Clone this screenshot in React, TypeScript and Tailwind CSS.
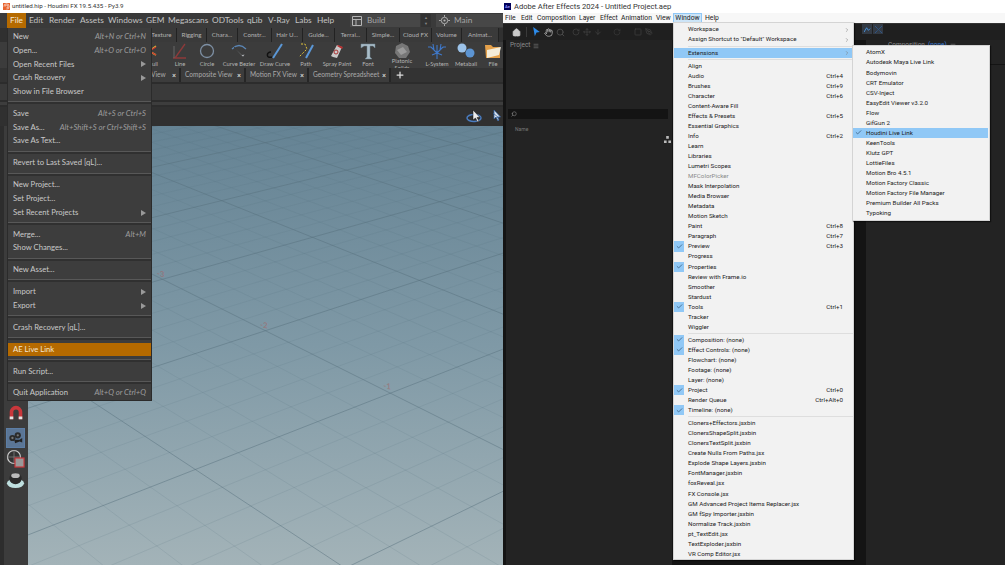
import { Check, ChevronRight, Hand, Home, Plus, RotateCw, Search, Square, PenTool, ArrowDown, Move, Menu } from 'lucide-react';

type HItem = { label?: string; keys?: string; arrow?: boolean; active?: boolean; sep?: boolean };

const fileMenu: HItem[] = [
  { label: 'New', keys: 'Alt+N or Ctrl+N' },
  { label: 'Open...', keys: 'Alt+O or Ctrl+O' },
  { label: 'Open Recent Files', arrow: true },
  { label: 'Crash Recovery', arrow: true },
  { label: 'Show in File Browser' },
  { sep: true },
  { label: 'Save', keys: 'Alt+S or Ctrl+S' },
  { label: 'Save As...', keys: 'Alt+Shift+S or Ctrl+Shift+S' },
  { label: 'Save As Text...' },
  { sep: true },
  { label: 'Revert to Last Saved [qL]...' },
  { sep: true },
  { label: 'New Project...' },
  { label: 'Set Project...' },
  { label: 'Set Recent Projects', arrow: true },
  { sep: true },
  { label: 'Merge...', keys: 'Alt+M' },
  { label: 'Show Changes...' },
  { sep: true },
  { label: 'New Asset...' },
  { sep: true },
  { label: 'Import', arrow: true },
  { label: 'Export', arrow: true },
  { sep: true },
  { label: 'Crash Recovery [qL]...' },
  { sep: true },
  { label: 'AE Live Link', active: true },
  { sep: true },
  { label: 'Run Script...' },
  { sep: true },
  { label: 'Quit Application', keys: 'Alt+Q or Ctrl+Q' },
];

type AItem = { label?: string; keys?: string; arrow?: boolean; on?: boolean; sep?: boolean; hot?: boolean; dim?: boolean };

const windowMenu: AItem[] = [
  { label: 'Workspace', arrow: true },
  { label: 'Assign Shortcut to "Default" Workspace', arrow: true },
  { sep: true },
  { label: 'Extensions', arrow: true, hot: true },
  { sep: true },
  { label: 'Align' },
  { label: 'Audio', keys: 'Ctrl+4' },
  { label: 'Brushes', keys: 'Ctrl+9' },
  { label: 'Character', keys: 'Ctrl+6' },
  { label: 'Content-Aware Fill' },
  { label: 'Effects & Presets', keys: 'Ctrl+5' },
  { label: 'Essential Graphics' },
  { label: 'Info', keys: 'Ctrl+2' },
  { label: 'Learn' },
  { label: 'Libraries' },
  { label: 'Lumetri Scopes' },
  { label: 'MFColorPicker', dim: true },
  { label: 'Mask Interpolation' },
  { label: 'Media Browser' },
  { label: 'Metadata' },
  { label: 'Motion Sketch' },
  { label: 'Paint', keys: 'Ctrl+8' },
  { label: 'Paragraph', keys: 'Ctrl+7' },
  { label: 'Preview', keys: 'Ctrl+3', on: true },
  { label: 'Progress' },
  { label: 'Properties', on: true },
  { label: 'Review with Frame.io' },
  { label: 'Smoother' },
  { label: 'Stardust' },
  { label: 'Tools', keys: 'Ctrl+1', on: true },
  { label: 'Tracker' },
  { label: 'Wiggler' },
  { sep: true },
  { label: 'Composition: (none)', on: true },
  { label: 'Effect Controls: (none)', on: true },
  { label: 'Flowchart: (none)' },
  { label: 'Footage: (none)' },
  { label: 'Layer: (none)' },
  { label: 'Project', keys: 'Ctrl+0', on: true },
  { label: 'Render Queue', keys: 'Ctrl+Alt+0' },
  { label: 'Timeline: (none)', on: true },
  { sep: true },
  { label: 'Cloners+Effectors.jsxbin' },
  { label: 'ClonersShapeSplit.jsxbin' },
  { label: 'ClonersTextSplit.jsxbin' },
  { label: 'Create Nulls From Paths.jsx' },
  { label: 'Explode Shape Layers.jsxbin' },
  { label: 'FontManager.jsxbin' },
  { label: 'foxReveal.jsx' },
  { label: 'FX Console.jsx' },
  { label: 'GM Advanced Project Items Replacer.jsx' },
  { label: 'GM fSpy Importer.jsxbin' },
  { label: 'Normalize Track.jsxbin' },
  { label: 'pt_TextEdit.jsx' },
  { label: 'TextExploder.jsxbin' },
  { label: 'VR Comp Editor.jsx' },
];

const extensions = [
  'AtomX', 'Autodesk Maya Live Link', 'Bodymovin', 'CRT Emulator', 'CSV-Inject', 'EasyEdit Viewer v3.2.0',
  'Flow', 'GifGun 2', 'Houdini Live Link', 'KeenTools', 'Klutz GPT', 'LottieFiles', 'Motion Bro 4.5.1',
  'Motion Factory Classic', 'Motion Factory File Manager', 'Premium Builder All Packs', 'Typoking',
];

const houdiniMenus = [
  ['Edit', 'w-[20px]'], ['Render', 'w-[31px]'], ['Assets', 'w-[28px]'], ['Windows', 'w-[38px]'], ['GEM', 'w-[22px]'],
  ['Megascans', 'w-[44px]'], ['ODTools', 'w-[35px]'], ['qLib', 'w-[21px]'], ['V-Ray', 'w-[27px]'], ['Labs', 'w-[22px]'], ['Help', 'w-[25px]'],
];

const shelfTabs = [
  ['Texture', 'w-[30px]'], ['Rigging', 'w-[30px]'], ['Chara...', 'w-[31px]'], ['Constr...', 'w-[34px]'], ['Hair U...', 'w-[31px]'],
  ['Guide...', 'w-[32px]'], ['Terrai...', 'w-[32px]'], ['Simple...', 'w-[33px]'], ['Cloud FX', 'w-[32px]'], ['Volume', 'w-[30px]'], ['Animat...', 'w-[37px]'],
];

function Viewport() {
  // floor grid in perspective, in a 3x coordinate space; every fifth line is the heavy one
  const vpA = [5500, -1050];
  const vpB = [-3150, -1115];
  const lines: { x1: number; y1: number; x2: number; y2: number; major: boolean }[] = [];
  for (let i = -100; i <= 30; i++) {
    const n = i / 5;
    const x = -3150 + 36068 / (8.32 - n);
    const y = 460 + 0.5 * x;
    const s = (y - vpA[1]) / (x - vpA[0]);
    lines.push({ x1: vpA[0], y1: vpA[1], x2: -400, y2: vpA[1] + s * (-400 - vpA[0]), major: i % 5 === 0 });
  }
  for (let i = -40; i <= 150; i++) {
    const k = i / 5;
    const x = 5500 - 43833 / (9.17 + k);
    const y = -1050 + (5500 - x) * 0.391;
    const s = (y - vpB[1]) / (x - vpB[0]);
    lines.push({ x1: vpB[0], y1: vpB[1], x2: 1100, y2: vpB[1] + s * (1100 - vpB[0]), major: i % 5 === 0 });
  }
  return (
    <div className="flex-1 overflow-hidden bg-gradient-to-b from-[#658394] via-[#7f99a6] to-[#a3b3b8]">
      <svg viewBox="-366 18 1425 1317" className="block h-full w-full">
        {lines.map((l, i) => (
          <line key={i} x1={l.x1} y1={l.y1} x2={l.x2} y2={l.y2} stroke="#566f7d" strokeOpacity={l.major ? 0.6 : 0.28} strokeWidth={l.major ? 2.4 : 1.6} />
        ))}
        <g fill="#a0686a" fillOpacity="0.6" fontFamily="Lato, sans-serif" fontSize="24" fontWeight="700">
          <text transform="translate(20 468) skewY(10)">-3</text>
          <text transform="translate(330 622) skewY(10)">-2</text>
          <text transform="translate(700 805) skewY(10)">-1</text>
        </g>
      </svg>
    </div>
  );
}

function ShelfIcon({ name }: { name: string }) {
  return (
    <svg viewBox="0 0 20 18" className="h-[18px] w-[20px]">
      {name === 'ull' && <path d="M4 1v16M4 9l7-5M4 9l7 4" stroke="#d8c33a" strokeWidth="1.500" fill="none" />}
      {name === 'ull' && <path d="M6 8l5-3M6 10l5 3" stroke="#c33" strokeWidth="1.200" fill="none" />}
      {name === 'Line' && <path d="M3 16h13M5 16L15 2" stroke="#8d3a3a" strokeWidth="1.300" fill="none" />}
      {name === 'Line' && <path d="M4 4v12" stroke="#666" strokeWidth="1" />}
      {name === 'Circle' && <circle cx="10" cy="9" r="6.500" stroke="#7d8fa3" strokeWidth="1.300" fill="none" />}
      {name === 'Curve Bezier' && <path d="M3 7Q10 0 17 7" stroke="#5b86b5" strokeWidth="1.200" fill="none" />}
      {name === 'Curve Bezier' && <path d="M5 5l8 8 3-1-2 3z" fill="#d9dde2" stroke="#333" strokeWidth="0.600" />}
      {name === 'Draw Curve' && <path d="M7 15C1 17 1 10 6 10" stroke="#111" strokeWidth="1.500" fill="none" />}
      {name === 'Draw Curve' && <path d="M8 16L17 2" stroke="#5b97d6" strokeWidth="2" />}
      {name === 'Path' && <path d="M5 2h4l2 5-8 8" stroke="#e0c13a" strokeWidth="1" strokeDasharray="2 1.500" fill="none" />}
      {name === 'Path' && <path d="M10 16l7-13" stroke="#5b97d6" strokeWidth="2" />}
      {name === 'Spray Paint' && <path d="M6 15l-2-1L10 3l5 2-5 11z" fill="#c9c9c9" />}
      {name === 'Spray Paint' && <path d="M11 3l5 2-1 2-5-3z" fill="#b83030" />}
      {name === 'Spray Paint' && <circle cx="9" cy="10" r="2" fill="none" stroke="#a33" />}
      {name === 'Font' && <path d="M3 2h14v4l-2-2h-3v11l2 2H7l2-2V4H6L3 6z" fill="#a9bcc8" stroke="#6f8492" strokeWidth="0.500" />}
      {name === 'Platonic Solids' && <path d="M10 1l6 3 2 6-4 6H7l-4-5 1-7z" fill="#777" />}
      {name === 'Platonic Solids' && <path d="M5 8l6-3 4 5-6 3z" fill="#9a9a9a" />}
      {name === 'L-System' && <path d="M10 17V9M10 11L4 5M10 11l6-6M7 8L6 2M13 8l1-6M4 5L1 5M16 5l3 0M10 9V3M5 13l5-2M15 13l-5-2" stroke="#3f78c9" strokeWidth="1.100" fill="none" />}
      {name === 'Metaball' && <circle cx="6" cy="6" r="4.500" fill="#9cc3ea" />}
      {name === 'Metaball' && <circle cx="14" cy="11" r="4.500" fill="#5c94d2" />}
      {name === 'File' && <path d="M2 3h6l2 2h7v11H3z" fill="#e4a04a" />}
      {name === 'File' && <path d="M4 8l14-3-2 8-12 3z" fill="#f4ecd8" />}
    </svg>
  );
}

function FileMenu() {
  return (
    <div className="absolute left-[7px] top-[28px] z-20 w-[145px] border-x border-b border-[#2b2b2b] bg-[#3d3d3d] pt-[2px] font-['Lato',sans-serif] text-[7.700px] text-[#c9c9c9]">
      {fileMenu.map((item, i) =>
        item.sep ? (
          <div key={i} className="h-[8.150px] pt-[2.500px]">
            <div className="h-[1px] bg-[#585858]" />
            <div className="h-[2px] bg-[#303030]" />
          </div>
        ) : (
          <div
            key={i}
            className={`flex h-[13.750px] items-center justify-between pl-[5px] pr-[5px] leading-none ${item.active ? 'bg-[#b56a00] text-[#f3e6d2]' : ''}`}
          >
            <span>{item.label}</span>
            {item.keys && <span className="italic text-[#9d9d9d]">{item.keys}</span>}
            {item.arrow && <span className="h-0 w-0 border-y-[3px] border-l-[5px] border-y-transparent border-l-[#9a9a9a]" />}
          </div>
        ),
      )}
    </div>
  );
}

function HoudiniWindow() {
  return (
    <div className="relative flex h-full w-[503px] flex-none flex-col overflow-hidden bg-[#333] font-['Lato',sans-serif] text-[#b4b4b4]">
      <div className="flex h-[13px] items-center gap-[2px] bg-white pl-[3px] font-['Roboto',sans-serif] text-[6.200px] text-[#333]">
        <svg viewBox="0 0 8 8" className="h-[7px] w-[7px]">
          <rect width="8" height="8" fill="#e8622c" />
          <path d="M1 4a3 3 0 1 1 3 3M2.500 4a1.500 1.500 0 1 1 1.500 1.500" stroke="#fff" strokeWidth="0.700" fill="none" />
        </svg>
        <span>untitled.hip - Houdini FX 19.5.435 - Py3.9</span>
      </div>

      <div className="flex h-[15px] items-center bg-[#3a3a3a] pl-[7px] text-[8.300px] text-[#c2c2c2]">
        <div className="flex h-full w-[19px] items-center justify-center bg-[#b56a00] text-[#f3e6d2]">File</div>
        <div className="flex h-full items-center pl-[3px]">
          {houdiniMenus.map(([name, w]) => (
            <span key={name} className={w}>{name}</span>
          ))}
        </div>
        <div className="ml-[8px] flex h-[13px] w-[70px] items-center gap-[5px] bg-[#474747] pl-[2px] text-[#a5a5a5]">
          <svg viewBox="0 0 10 10" className="h-[10px] w-[10px]">
            <path d="M.5.5h9v9h-9zM.5 3.500h9M4 3.500v6" stroke="#b5b5b5" fill="none" />
          </svg>
          Build
        </div>
        <span className="ml-[1px] flex h-[13px] w-[10px] flex-col items-center justify-center gap-[1px] bg-[#333] text-[4px] leading-[5px] text-[#888]">
          <span>▲</span>
          <span>▼</span>
        </span>
        <div className="ml-[5px] flex h-[13px] flex-1 items-center gap-[4px] bg-[#474747] pl-[3px] text-[#a5a5a5]">
          <svg viewBox="0 0 12 12" className="h-[11px] w-[11px]">
            <circle cx="6" cy="6" r="3.500" stroke="#b5b5b5" fill="none" />
            <circle cx="6" cy="6" r="1.200" fill="#b5b5b5" />
            <path d="M6 0v2M6 10v2M0 6h2M10 6h2" stroke="#b5b5b5" />
          </svg>
          Main
        </div>
      </div>

      <div className="flex h-[14px] items-stretch bg-[#303030] pl-[147px] text-[6.200px]">
        {shelfTabs.map(([name, w]) => (
          <div key={name} className={`flex flex-none items-center justify-center border-r border-[#222] bg-[#3a3a3a] ${w}`}>{name}</div>
        ))}
      </div>

      <div className="flex h-[26px] items-start bg-[#3c3c3c] pl-[143px] text-[5.800px] leading-[7px]">
        {([
          ['ull', 'w-[24px]'], ['Line', 'w-[26px]'], ['Circle', 'w-[28px]'], ['Curve Bezier', 'w-[36px]'], ['Draw Curve', 'w-[36px]'], ['Path', 'w-[26px]'],
          ['Spray Paint', 'w-[36px]'], ['Font', 'w-[26px]'], ['Platonic Solids', 'w-[42px]'], ['L-System', 'w-[28px]'], ['Metaball', 'w-[30px]'], ['File', 'w-[24px]'],
        ] as const).map(([name, w]) => (
          <div key={name} className={`flex flex-none flex-col items-center text-center ${w}`}>
            <ShelfIcon name={name} />
            <span className={name === 'Platonic Solids' ? 'mt-[-3px] w-[30px]' : ''}>{name}</span>
          </div>
        ))}
      </div>

      <div className="flex h-[14px] items-stretch bg-[#333] pl-[147px] text-[6.600px] text-[#aaa]">
        {[
          ['View', 'w-[34px]'], ['Composite View', 'w-[65px]'], ['Motion FX View', 'w-[63px]'], ['Geometry Spreadsheet', 'w-[82px]'],
        ].map(([name, w]) => (
          <div key={name} className={`flex flex-none items-center justify-between border-r-2 border-[#262626] bg-[#3c3c3c] pl-[4px] pr-[3px] ${w}`}>
            <span className="whitespace-nowrap">{name}</span>
            <span className="text-[7px] font-bold text-[#ddd]">×</span>
          </div>
        ))}
        <Plus size={10} strokeWidth={3} className="ml-[4px] self-center text-[#ddd]" />
      </div>

      <div className="h-[18px] border-t-2 border-[#2c2c2c] bg-[#3a3a3a]" />
      <div className="h-[7px] border-y-2 border-[#2c2c2c] bg-[#3d3d3d]" />
      <div className="relative h-[19px] bg-[#303030]">
        <svg viewBox="0 0 40 16" className="absolute left-[464px] top-[1px] h-[16px] w-[40px]">
          <ellipse cx="10" cy="10" rx="7" ry="3.500" fill="none" stroke="#4a7cc0" strokeWidth="1.500" />
          <path d="M9 2v10l2.500-2 2 4 1.500-1-2-3.500h3z" fill="#eee" stroke="#111" strokeWidth="0.500" />
          <path d="M29 5l6 5M30 2v9l2-2 2 4 1-1-1.500-3h3z" fill="#dfe6ef" stroke="#2e5e9e" strokeWidth="0.800" />
        </svg>
      </div>

      <div className="flex min-h-0 flex-1">
        <div className="flex w-[28px] flex-none flex-col items-start border-l-4 border-[#2d2d2d] bg-[#3c3c3c] pl-[2px] pt-[278px]">
          <svg viewBox="0 0 20 18" className="ml-[1px] h-[18px] w-[18px]">
            <path d="M3 16V8a7 7 0 0 1 14 0v8h-4V8a3 3 0 0 0-6 0v8z" fill="#c9373b" />
            <path d="M3 13h4v3H3zM13 13h4v3h-4z" fill="#e4e4e4" />
          </svg>
          <div className="mt-[6px] flex h-[20px] w-[19px] items-center justify-center border border-[#5c7ea6] bg-[#5b7696]">
            <svg viewBox="0 0 18 16" className="h-[16px] w-[16px]">
              <circle cx="5" cy="8" r="3.500" fill="#2b2b2b" />
              <circle cx="11" cy="5" r="3.500" fill="#2b2b2b" />
              <circle cx="5" cy="8" r="1.300" fill="#777" />
              <circle cx="11" cy="5" r="1.300" fill="#777" />
              <path d="M7 10h6l3-2v5l-3-1-5 2z" fill="#222" />
            </svg>
          </div>
          <svg viewBox="0 0 20 20" className="mt-[1px] h-[20px] w-[20px]">
            <circle cx="8" cy="8" r="6.500" fill="#333" stroke="#cfcfcf" strokeWidth="1.200" />
            <path d="M8 1v14M1 8h14" stroke="#888" strokeWidth="0.700" />
            <rect x="9" y="9" width="9" height="9" fill="#999" stroke="#c9373b" strokeWidth="1.200" />
          </svg>
          <svg viewBox="0 0 20 20" className="mt-[1px] h-[19px] w-[19px]">
            <ellipse cx="10" cy="14" rx="9" ry="5" fill="#bfe0e0" />
            <ellipse cx="10" cy="9" rx="6.500" ry="6" fill="#2a2a2a" />
            <ellipse cx="10" cy="6" rx="4.500" ry="2.500" fill="#bbb" />
          </svg>
        </div>
        <Viewport />
      </div>

      <FileMenu />
    </div>
  );
}

function WindowMenu() {
  return (
    <div className="absolute left-[170px] top-[22px] z-20 w-[181px] border border-[#d4d4d4] bg-[#f2f2f2] pb-[0.500px] pt-[1.500px] font-['Roboto',sans-serif] text-[6.200px] text-[#1c1c1c] shadow-[1px_1px_1px_rgba(0,0,0,0.5)]">
      {windowMenu.map((item, i) =>
        item.sep ? (
          <div key={i} className="flex h-[3px] items-center pl-[14px]">
            <div className="h-[1px] w-full bg-[#dedede]" />
          </div>
        ) : (
          <div key={i} className={`flex h-[10.050px] items-center pr-[3px] leading-none ${item.hot ? 'bg-[#90c8f6]' : ''}`}>
            <span className={`flex h-full w-[10px] flex-none items-center justify-center ${item.on ? 'bg-[#90c8f6]' : ''}`}>
              {item.on && <Check size={7} strokeWidth={2} className="text-[#1f3a55]" />}
            </span>
            <span className={`ml-[4px] flex-1 whitespace-nowrap ${item.dim ? 'text-[#8a8a8a]' : ''}`}>{item.label}</span>
            {item.keys && <span className="mr-[7px]">{item.keys}</span>}
            {item.arrow && <ChevronRight size={6} className="text-[#777]" />}
          </div>
        ),
      )}
    </div>
  );
}

function ExtensionsMenu() {
  return (
    <div className="absolute left-[349px] top-[45px] z-30 w-[138px] border border-[#d4d4d4] bg-[#f2f2f2] py-[1.500px] pr-[1px] font-['Roboto',sans-serif] text-[6.200px] text-[#1c1c1c] shadow-[1px_1px_1px_rgba(0,0,0,0.5)]">
      {extensions.map((name) => {
        const hot = name === 'Houdini Live Link';
        return (
          <div key={name} className={`flex h-[10.050px] items-center leading-none ${hot ? 'bg-[#90c8f6]' : ''}`}>
            <span className="flex h-full w-[10px] flex-none items-center justify-center">
              {hot && <Check size={7} strokeWidth={2} className="text-[#1f3a55]" />}
            </span>
            <span className="ml-[3px] whitespace-nowrap">{name}</span>
          </div>
        );
      })}
    </div>
  );
}

function AeWindow() {
  return (
    <div className="relative flex h-full w-[502px] flex-none flex-col overflow-hidden bg-[#1a1a1a] font-['Roboto',sans-serif]">
      <div className="flex h-[13px] items-center gap-[3px] bg-white pl-[1px] text-[7.600px] text-[#333]">
        <span className="flex h-[7px] w-[7px] items-center justify-center bg-[#00005b] text-[4px] font-bold leading-none text-[#9999ff]">Ae</span>
        <span>Adobe After Effects 2024 - Untitled Project.aep</span>
      </div>

      <div className="flex h-[10px] items-center bg-[#f7f7f7] pl-[2px] text-[6.800px] leading-none text-[#1c1c1c]">
        {[
          ['File', 'w-[16px]'], ['Edit', 'w-[16px]'], ['Composition', 'w-[42px]'], ['Layer', 'w-[21px]'], ['Effect', 'w-[21px]'], ['Animation', 'w-[35px]'], ['View', 'w-[17px]'],
        ].map(([name, w]) => (
          <span key={name} className={w}>{name}</span>
        ))}
        <span className="flex h-full w-[29px] items-center justify-center border border-[#90c8f6] bg-[#cce4f7]">Window</span>
        <span className="ml-[3px]">Help</span>
      </div>

      <div className="flex h-[17px] items-center gap-[3px] border-t border-[#333] bg-[#1f1f1f] pl-[9px]">
        <Home size={9} fill="#c9c9c9" className="text-[#c9c9c9]" />
        <span className="mx-[2px] h-[10px] w-px bg-[#3a3a3a]" />
        <svg viewBox="0 0 10 12" className="h-[10px] w-[9px]">
          <path d="M1 0l8 6-4 .500L3 11z" fill="#2d8ceb" />
        </svg>
        <Hand size={9} className="text-[#b5b5b5]" />
        <Search size={9} className="text-[#555]" />
        <RotateCw size={8} className="ml-[4px] text-[#444]" />
        <Move size={8} className="text-[#444]" />
        <ArrowDown size={8} className="text-[#444]" />
        <RotateCw size={8} className="ml-[8px] text-[#3a3a3a]" />
        <Square size={8} className="ml-[10px] text-[#444]" />
        <PenTool size={8} className="text-[#444]" />
      </div>

      <div className="flex min-h-0 flex-1 gap-[3px] bg-[#141414] pl-[3px]">
        <div className="flex w-[166px] flex-none flex-col bg-[#232323] text-[#8d8d8d]">
          <div className="flex h-[69px] items-start gap-[3px] pl-[4px] pt-[1px] text-[6.500px]">
            Project
            <Menu size={6} className="mt-[2px]" />
          </div>
          <div className="ml-[2px] flex h-[10px] w-[160px] items-center bg-[#141414] pl-[3px]">
            <Search size={6} className="-scale-x-100 text-[#999]" />
          </div>
          <div className="mt-[7px] pl-[9px] text-[5px] leading-[6px] text-[#777]">Name</div>
          <div className="mt-[4px] flex justify-end pr-[1px]">
            <svg viewBox="0 0 8 8" className="h-[7px] w-[7px]">
              <path d="M2.500 0h3v3h-3zM0 5h3v3H0zM5 5h3v3H5z" fill="#bbb" />
            </svg>
          </div>
        </div>
        <div className="flex flex-1 gap-[5px] pl-[191px]">
          <div className="flex flex-1 flex-col bg-[#232323]">
            <div className="flex h-[24px] items-start gap-[3px] pl-[22px] pt-[1px] text-[6.500px] text-[#8d8d8d]">
              Composition <span className="text-[#3d7fd6]">(none)</span>
              <Menu size={6} className="mt-[2px]" />
            </div>
            <div className="h-px bg-[#141414]" />
          </div>
        </div>
      </div>

      <div className="absolute left-[359px] top-[24px] flex gap-[1px]">
        <span className="flex h-[10px] w-[10px] items-center justify-center bg-[#333a44]">
          <svg viewBox="0 0 8 8" className="h-[7px] w-[7px]"><path d="M0 7l3-5 2 3 2-2" stroke="#4a9be8" fill="none" /></svg>
        </span>
        <span className="flex h-[10px] w-[10px] items-center justify-center bg-[#333a44]">
          <svg viewBox="0 0 8 8" className="h-[7px] w-[7px]"><path d="M0 0l8 8M8 0L0 8" stroke="#2a6fc0" strokeDasharray="1 1" /></svg>
        </span>
      </div>

      <WindowMenu />
      <ExtensionsMenu />
    </div>
  );
}

export default function App() {
  return (
    <div className="flex h-[565px] w-[1005px] overflow-hidden bg-white">
      <HoudiniWindow />
      <AeWindow />
    </div>
  );
}
